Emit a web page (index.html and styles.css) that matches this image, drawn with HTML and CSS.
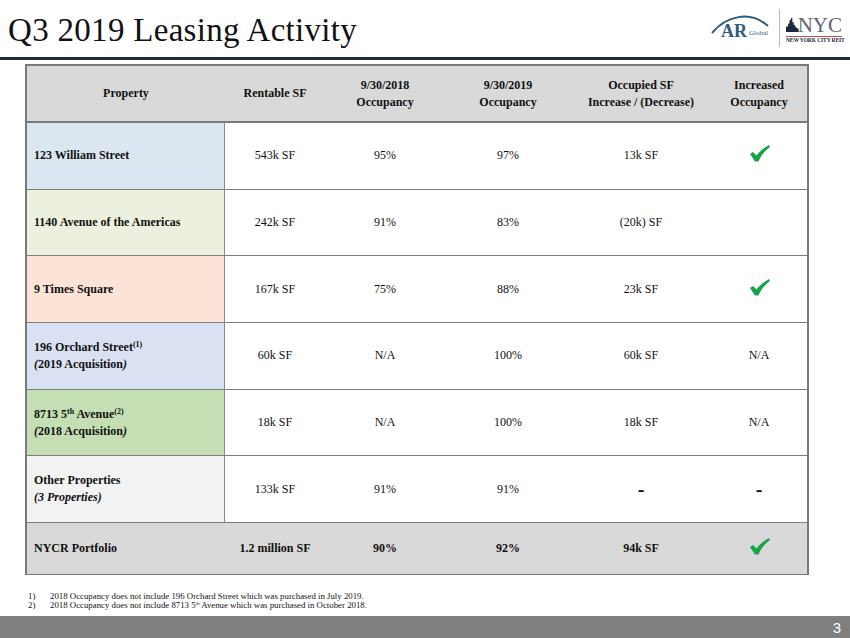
FILE: index.html
```html
<!DOCTYPE html>
<html>
<head>
<meta charset="utf-8">
<link rel="stylesheet" href="styles.css">
</head>
<body>
<div class="page">
  <header class="top">
    <h1 class="title">Q3 2019 Leasing Activity</h1>
    <div class="logos">
      <div class="ar-logo">
        <svg class="ar-arc" width="60" height="24" viewBox="0 0 60 24"><path d="M2 23 C 16 6, 40 0, 58 16" fill="none" stroke="#2d5b85" stroke-width="2"/></svg>
        <span class="ar">AR</span><span class="global">Global</span>
      </div>
      <div class="sep"></div>
      <div class="nyc-logo">
        <div class="nyc-top">
          <svg width="18" height="20" viewBox="0 0 18 20"><path d="M0 20 V12 H3 V8 H5 V3 H7 V0 H9 V6 H11 V10 H13 V13 H15 V15 H18 V20 Z" fill="#1c2a3e"/></svg>
          <span class="nyc">NYC</span>
        </div>
        <div class="nyc-line"></div>
        <div class="nyc-sub">NEW YORK CITY REIT</div>
      </div>
    </div>
  </header>

  <div class="table">
    <div class="row head">
      <div class="c c1"><span>Property</span></div>
      <div class="c"><span>Rentable SF</span></div>
      <div class="c"><span>9/30/2018<br>Occupancy</span></div>
      <div class="c"><span>9/30/2019<br>Occupancy</span></div>
      <div class="c"><span>Occupied SF<br>Increase / (Decrease)</span></div>
      <div class="c"><span>Increased<br>Occupancy</span></div>
    </div>
    <div class="row">
      <div class="c c1 blue"><span>123 William Street</span></div>
      <div class="c"><span>543k SF</span></div>
      <div class="c"><span>95%</span></div>
      <div class="c"><span>97%</span></div>
      <div class="c"><span>13k SF</span></div>
      <div class="c"><svg class="check" width="20" height="17" viewBox="0 0 20 17"><path d="M0 9 L3 7 L6.5 10.5 C10 6, 14 2.5, 19 0 L20 2 C15 5.5, 11 10.5, 8.5 16.5 L5 16.5 Z" fill="#16a34a"/></svg></div>
    </div>
    <div class="row">
      <div class="c c1 green"><span>1140 Avenue of the Americas</span></div>
      <div class="c"><span>242k SF</span></div>
      <div class="c"><span>91%</span></div>
      <div class="c"><span>83%</span></div>
      <div class="c"><span>(20k) SF</span></div>
      <div class="c"></div>
    </div>
    <div class="row">
      <div class="c c1 peach"><span>9 Times Square</span></div>
      <div class="c"><span>167k SF</span></div>
      <div class="c"><span>75%</span></div>
      <div class="c"><span>88%</span></div>
      <div class="c"><span>23k SF</span></div>
      <div class="c"><svg class="check" width="20" height="17" viewBox="0 0 20 17"><path d="M0 9 L3 7 L6.5 10.5 C10 6, 14 2.5, 19 0 L20 2 C15 5.5, 11 10.5, 8.5 16.5 L5 16.5 Z" fill="#16a34a"/></svg></div>
    </div>
    <div class="row">
      <div class="c c1 lav"><span>196 Orchard Street<sup>(1)</sup><br><i>(</i>2019 Acquisition<i>)</i></span></div>
      <div class="c"><span>60k SF</span></div>
      <div class="c"><span>N/A</span></div>
      <div class="c"><span>100%</span></div>
      <div class="c"><span>60k SF</span></div>
      <div class="c"><span>N/A</span></div>
    </div>
    <div class="row">
      <div class="c c1 dgreen"><span>8713 5<sup>th</sup> Avenue<sup>(2)</sup><br><i>(</i>2018 Acquisition<i>)</i></span></div>
      <div class="c"><span>18k SF</span></div>
      <div class="c"><span>N/A</span></div>
      <div class="c"><span>100%</span></div>
      <div class="c"><span>18k SF</span></div>
      <div class="c"><span>N/A</span></div>
    </div>
    <div class="row">
      <div class="c c1 grey"><span>Other Properties<br><i>(3 Properties)</i></span></div>
      <div class="c"><span>133k SF</span></div>
      <div class="c"><span>91%</span></div>
      <div class="c"><span>91%</span></div>
      <div class="c"><span class="dash">-</span></div>
      <div class="c"><span class="dash">-</span></div>
    </div>
    <div class="row total">
      <div class="c c1"><span>NYCR Portfolio</span></div>
      <div class="c b"><span>1.2 million SF</span></div>
      <div class="c b"><span>90%</span></div>
      <div class="c b"><span>92%</span></div>
      <div class="c b"><span>94k SF</span></div>
      <div class="c"><svg class="check" width="20" height="17" viewBox="0 0 20 17"><path d="M0 9 L3 7 L6.5 10.5 C10 6, 14 2.5, 19 0 L20 2 C15 5.5, 11 10.5, 8.5 16.5 L5 16.5 Z" fill="#16a34a"/></svg></div>
    </div>
  </div>

  <div class="notes">
    <div class="note"><span class="num">1)</span><span>2018 Occupancy does not include 196 Orchard Street which was purchased in July 2019.</span></div>
    <div class="note"><span class="num">2)</span><span>2018 Occupancy does not include 8713 5<sup>th</sup> Avenue which was purchased in October 2018.</span></div>
  </div>

  <footer class="bar"><span class="pg">3</span></footer>
</div>
</body>
</html>
```

FILE: styles.css
```css
* { box-sizing: border-box; }
html, body { margin: 0; padding: 0; background: #fff; }
.page {
  width: 850px;
  height: 638px;
  display: flex;
  flex-direction: column;
  font-family: "Liberation Serif", "Times New Roman", serif;
  color: #111;
  overflow: hidden;
}
.top {
  height: 60px;
  display: flex;
  justify-content: space-between;
  align-items: flex-start;
  border-bottom: 3px solid #1f2b36;
  padding: 0 8px 0 8px;
}
.title {
  margin: 11px 0 0 0;
  font-weight: normal;
  font-size: 33px;
  line-height: 38px;
  letter-spacing: 0.3px;
}
.logos {
  display: flex;
  align-items: center;
  margin-top: 9px;
}
.ar-logo {
  position: relative;
  width: 66px;
  height: 36px;
  margin-right: 6px;
}
.ar-arc { position: absolute; left: 3px; top: 0; }
.ar {
  position: absolute;
  left: 14px;
  top: 11px;
  font-weight: bold;
  font-size: 18px;
  color: #2d5b85;
}
.global {
  position: absolute;
  left: 42px;
  top: 19px;
  font-size: 7px;
  color: #2d5b85;
}
.sep { width: 1px; height: 38px; background: #b8b8b8; margin-right: 6px; }
.nyc-logo { display: flex; flex-direction: column; width: 56px; }
.nyc-top { display: flex; align-items: flex-end; height: 21px; }
.nyc {
  font-size: 21px;
  line-height: 20px;
  color: #5b6476;
  margin-left: -1px;
}
.nyc-line { height: 1px; background: #c05050; margin-top: 1px; }
.nyc-sub { font-size: 5.5px; font-weight: bold; color: #1c2a3e; white-space: nowrap; letter-spacing: -0.1px; }

.table {
  margin: 4px 0 0 25px;
  width: 784px;
  border-top: 2px solid #7a7a7a;
  border-left: 2px solid #7a7a7a;
  border-right: 2px solid #7a7a7a;
  border-bottom: 1px solid #7a7a7a;
}
.row {
  display: grid;
  grid-template-columns: 198px 100px 120px 126px 140px 96px;
  height: 66.7px;
  border-bottom: 1px solid #7f7f7f;
  font-size: 12px;
}
.row:last-child { border-bottom: none; height: 51px; }
.row.head { height: 57px; background: #d9d9d9; font-weight: bold; border-bottom: 2px solid #7a7a7a; }
.c {
  display: flex;
  align-items: center;
  justify-content: center;
  text-align: center;
  line-height: 17px;
}
.c1 {
  justify-content: flex-start;
  text-align: left;
  padding-left: 7px;
  font-weight: bold;
  border-right: 1px solid #8a8a8a;
}
.head .c1 { justify-content: center; padding-left: 0; border-right: none; }
.total .c1 { border-right: none; }
.b { font-weight: bold; }
.blue { background: #dce6f1; }
.green { background: #ebf1de; }
.peach { background: #fbe4d6; }
.lav { background: #d9e1f2; }
.dgreen { background: #c5dfb4; }
.grey { background: #f2f2f2; }
.total { background: #d9d9d9; }
sup { font-size: 8px; line-height: 0; vertical-align: 4px; }
.check { margin-top: -4px; margin-left: 2px; }
.dash { font-weight: bold; font-size: 20px; }

.notes {
  margin: 17px 0 0 28px;
  font-size: 8.8px;
  line-height: 9px;
}
.note { display: flex; }
.num { width: 22px; }
.notes sup { font-size: 5px; vertical-align: 3px; }
.bar {
  margin-top: auto;
  height: 22px;
  background: #7f7f7f;
  display: flex;
  justify-content: flex-end;
  align-items: center;
  padding-right: 9px;
}
.pg { color: #fff; font-family: "Liberation Sans", Arial, sans-serif; font-size: 15px; }
```
